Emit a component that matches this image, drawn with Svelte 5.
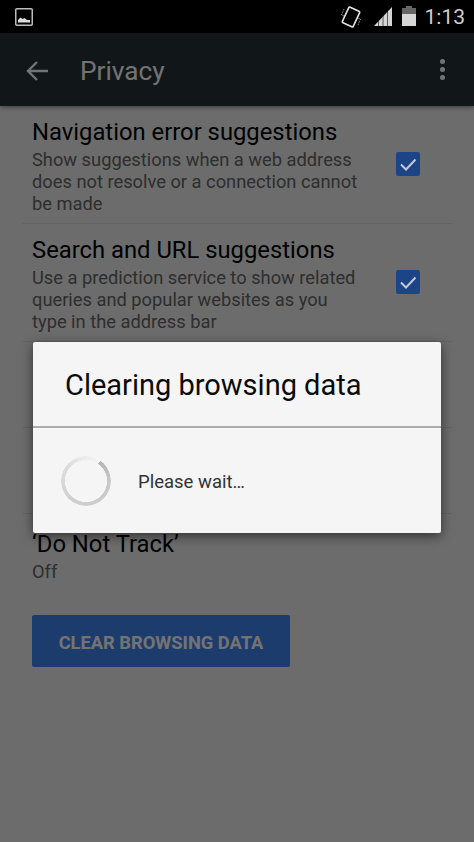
<script>
	const rows = [
		{
			title: 'Navigation error suggestions',
			sub: 'Show suggestions when a web address does not resolve or a connection cannot be made'
		},
		{
			title: 'Search and URL suggestions',
			sub: 'Use a prediction service to show related queries and popular websites as you type in the address bar'
		}
	];
</script>

<div class="phone">
	<div class="statusbar">
		<svg class="pic" viewBox="0 0 18 18" width="18" height="18">
			<rect x="0.75" y="0.75" width="16.5" height="16.5" rx="1" fill="none" stroke="#bdbdbd" stroke-width="1.5" />
			<path d="M3 14.5 L3 12 L5.5 9.5 L7.5 11 L9.5 10 L12 12 L15 12 L15 14.5 Z" fill="#dcdcdc" />
		</svg>
		<div class="status-right">
			<svg class="vibrate" viewBox="0 0 20 22" width="20" height="22">
				<rect x="4" y="2.5" width="12" height="17" rx="1.2" transform="rotate(25 10 11)" fill="none" stroke="#e4e4e4" stroke-width="1.6" />
				<path d="M3 3 L0.5 9 L3 10 M17 19 L19.5 13 L17 12" fill="none" stroke="#999" stroke-width="1" stroke-dasharray="1.5 1" />
			</svg>
			<svg class="signal" viewBox="0 0 18 19" width="18" height="19">
				<path d="M0 19 L18 0 L18 19 Z" fill="#d4d4d4" />
				<path d="M4.5 12 V19 M9 7 V19 M13.5 2 V19" stroke="#000" stroke-width="0.9" opacity="0.65" />
			</svg>
			<svg class="battery" viewBox="0 0 14 20" width="14" height="20">
				<path d="M4 0 H10 V2 H14 V20 H0 V2 H4 Z" fill="#666" />
				<rect x="0" y="8" width="14" height="12" fill="#d6d6d6" />
			</svg>
			<span class="time">1:13</span>
		</div>
	</div>

	<div class="toolbar">
		<svg class="back" viewBox="0 0 24 24" width="24" height="24">
			<path d="M23 12 H3 M12 3 L3 12 L12 21" fill="none" stroke="#fff" stroke-width="2.4" />
		</svg>
		<span class="toolbar-title">Privacy</span>
		<div class="dots"><i></i><i></i><i></i></div>
	</div>

	<div class="content">
		{#each rows as row (row.title)}
			<div class="row">
				<div class="row-text">
					<div class="row-title">{row.title}</div>
					<div class="row-sub">{row.sub}</div>
				</div>
				<div class="check">
					<svg viewBox="0 0 24 24" width="24" height="24">
						<path d="M5 12.5 L10 17.5 L19.5 7.5" fill="none" stroke="#c3cad6" stroke-width="2" />
					</svg>
				</div>
			</div>
		{/each}
		<!-- these two sit behind the dialog, only their dividers show -->
		<div class="row compact"></div>
		<div class="row compact"></div>
		<div class="row last">
			<div class="row-text">
				<div class="row-title">‘Do Not Track’</div>
				<div class="row-sub">Off</div>
			</div>
		</div>
		<button class="clear-btn">CLEAR BROWSING DATA</button>
	</div>

	<div class="scrim"></div>

	<div class="dialog">
		<div class="dialog-title">Clearing browsing data</div>
		<div class="dialog-body">
			<div class="spinner"></div>
			<span class="wait">Please wait…</span>
		</div>
	</div>
</div>

<style>
	:global(body) {
		margin: 0;
		background: #6c6c6c;
	}
	.phone {
		position: relative;
		width: 474px;
		height: 842px;
		overflow: hidden;
		display: flex;
		flex-direction: column;
		background: #f0f0f0;
		font-family: Roboto, 'Noto Sans', sans-serif;
	}
	.statusbar {
		position: relative;
		z-index: 3;
		height: 33px;
		flex-shrink: 0;
		background: #000;
		display: flex;
		align-items: center;
		justify-content: space-between;
		padding: 0 9px 0 15px;
	}
	.status-right {
		display: flex;
		align-items: center;
	}
	.vibrate {
		margin-right: 13px;
	}
	.signal {
		margin-right: 10px;
		margin-top: -1px;
	}
	.battery {
		margin-right: 9px;
		margin-top: -1px;
	}
	.time {
		font-size: 21px;
		color: #cfcfcf;
	}
	.toolbar {
		height: 73px;
		flex-shrink: 0;
		background: #263238;
		display: flex;
		align-items: center;
		box-sizing: border-box;
		padding: 3px 29px 0 25px;
		box-shadow: 0 2px 4px rgba(0, 0, 0, 0.35);
		position: relative;
		z-index: 1;
	}
	.toolbar-title {
		font-size: 26.2px;
		color: #fff;
		margin-left: 31px;
		flex: 1;
	}
	.dots {
		display: flex;
		flex-direction: column;
		gap: 3px;
		margin-top: -3px;
	}
	.dots i {
		width: 5px;
		height: 5px;
		border-radius: 50%;
		background: #fff;
	}
	.content {
		display: flex;
		flex-direction: column;
		padding: 0 22px;
	}
	.row {
		display: flex;
		align-items: center;
		box-sizing: border-box;
		height: 118px;
		padding: 12px 32px 0 10px;
		border-bottom: 1px solid #dcdcdc;
	}
	.row.compact {
		height: 86px;
	}
	.row.last {
		height: 78px;
		padding-top: 16px;
		border-bottom: none;
		align-items: flex-start;
	}
	.row-text {
		flex: 1;
		align-self: flex-start;
	}
	.row-title {
		font-size: 23.8px;
		line-height: 28px;
		color: #000;
	}
	.row-sub {
		font-size: 18.3px;
		line-height: 22px;
		margin-top: 3px;
		width: 330px;
		color: #666;
	}
	.check {
		position: relative;
		z-index: 3;
		width: 24px;
		height: 24px;
		flex-shrink: 0;
		margin-top: -13px;
		border-radius: 2px;
		background: #1e4488;
	}
	.check svg {
		display: block;
	}
	.clear-btn {
		align-self: flex-start;
		margin: 23px 0 0 10px;
		width: 258px;
		height: 52px;
		padding: 2px 0 0;
		border: none;
		border-radius: 2px;
		background: #4285f4;
		color: #fff;
		font-family: inherit;
		font-size: 18.3px;
		font-weight: 700;
	}
	.scrim {
		position: absolute;
		inset: 0;
		z-index: 2;
		background: rgba(0, 0, 0, 0.55);
	}
	.dialog {
		position: absolute;
		z-index: 3;
		left: 33px;
		top: 342px;
		width: 408px;
		height: 191px;
		display: flex;
		flex-direction: column;
		background: #f5f5f5;
		border-radius: 2px;
		box-shadow: 0 3px 12px rgba(0, 0, 0, 0.55);
	}
	.dialog-title {
		box-sizing: border-box;
		height: 86px;
		padding: 26px 32px 0;
		font-size: 29px;
		line-height: 34px;
		color: #0a0a0a;
		border-bottom: 2px solid #ababab;
	}
	.dialog-body {
		flex: 1;
		display: flex;
		align-items: center;
		padding: 2px 28px 0;
	}
	.spinner {
		width: 50px;
		height: 50px;
		margin-top: -2px;
		flex-shrink: 0;
		border-radius: 50%;
		background: conic-gradient(from 35deg, #b4b4b4 0%, #c8c8c8 15%, #d0d0d0 50%, #dcdcdc 75%, #eeeeee 92%, #f5f5f5 100%);
		mask: radial-gradient(circle, transparent 20.8px, #000 21.3px);
	}
	.wait {
		margin-left: 27px;
		font-size: 18.5px;
		color: #333;
	}
</style>
